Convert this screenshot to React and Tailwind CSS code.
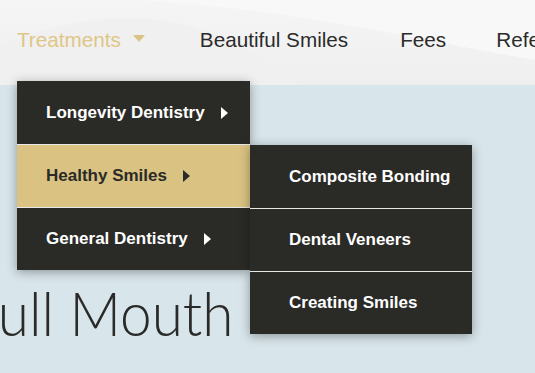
import React from "react";

const mainItems = [
  { label: "Longevity Dentistry", active: false },
  { label: "Healthy Smiles", active: true },
  { label: "General Dentistry", active: false },
];

const subItems = ["Composite Bonding", "Dental Veneers", "Creating Smiles"];

function CaretRight({ dark }) {
  return (
    <svg width="7" height="12" viewBox="0 0 7 12" className="ml-4 shrink-0">
      <path d="M0 0 L7 6 L0 12 Z" fill={dark ? "#2a2a26" : "#ffffff"} />
    </svg>
  );
}

export default function App() {
  return (
    <div
      className="relative w-[535px] h-[373px] overflow-hidden bg-[#d8e5ea]"
      style={{ fontFamily: '"Liberation Sans", Arial, sans-serif' }}
    >
      {/* header */}
      <div className="relative h-[85px] bg-gradient-to-b from-[#f6f5f5] to-[#efefef] overflow-hidden">
        <svg className="absolute inset-0" width="535" height="85" viewBox="0 0 535 85">
          <path d="M0 45 C120 0 200 10 300 85 L0 85 Z" fill="#f1f0f0" />
          <path d="M140 0 C300 10 420 40 535 60 L535 0 Z" fill="#f8f8f8" />
        </svg>
        <nav className="relative flex items-center h-full pl-[17px] pb-[5px] text-[20.7px] whitespace-nowrap">
          <span className="shrink-0 text-[#dec686]">Treatments</span>
          <svg width="12" height="7" viewBox="0 0 12 7" className="shrink-0 ml-[12px] mt-[-3px]">
            <path d="M0 0 L12 0 L6 7 Z" fill="#dcc383" />
          </svg>
          <span className="shrink-0 ml-[55px] text-[#2b2b2b]">Beautiful Smiles</span>
          <span className="shrink-0 ml-[52px] text-[#2b2b2b]">Fees</span>
          <span className="shrink-0 ml-[50px] text-[#2b2b2b]">Referrals</span>
        </nav>
      </div>

      {/* page heading */}
      <div
        className="pt-[196px] ml-[-32px] text-[62px] leading-none font-light text-[#2a2a28] whitespace-nowrap origin-left scale-x-[0.915]"
        style={{ fontFamily: 'Lato, "Open Sans", sans-serif' }}
      >
        Full Mouth
      </div>

      {/* main dropdown */}
      <div className="absolute left-[17px] top-[81px] w-[233px] bg-[#2a2a26] shadow-[0_2px_10px_rgba(0,0,0,0.35)]">
        {mainItems.map((item, i) => (
          <div
            key={item.label}
            className={`flex items-center h-[63px] pl-[29px] text-[17px] font-bold whitespace-nowrap ${
              item.active ? "bg-[#d9c282] text-[#2a2a26]" : "text-white"
            } ${i > 0 ? "border-t border-[#e8e8e8]" : ""}`}
          >
            {item.label}
            <CaretRight dark={item.active} />
          </div>
        ))}
      </div>

      {/* sub dropdown */}
      <div className="absolute left-[250px] top-[145px] w-[222px] bg-[#2a2a26] shadow-[0_2px_10px_rgba(0,0,0,0.35)]">
        {subItems.map((label, i) => (
          <div
            key={label}
            className={`flex items-center h-[63px] pl-[39px] text-[17px] font-bold text-white whitespace-nowrap ${
              i > 0 ? "border-t border-[#e8e8e8]" : ""
            }`}
          >
            {label}
          </div>
        ))}
      </div>
    </div>
  );
}
